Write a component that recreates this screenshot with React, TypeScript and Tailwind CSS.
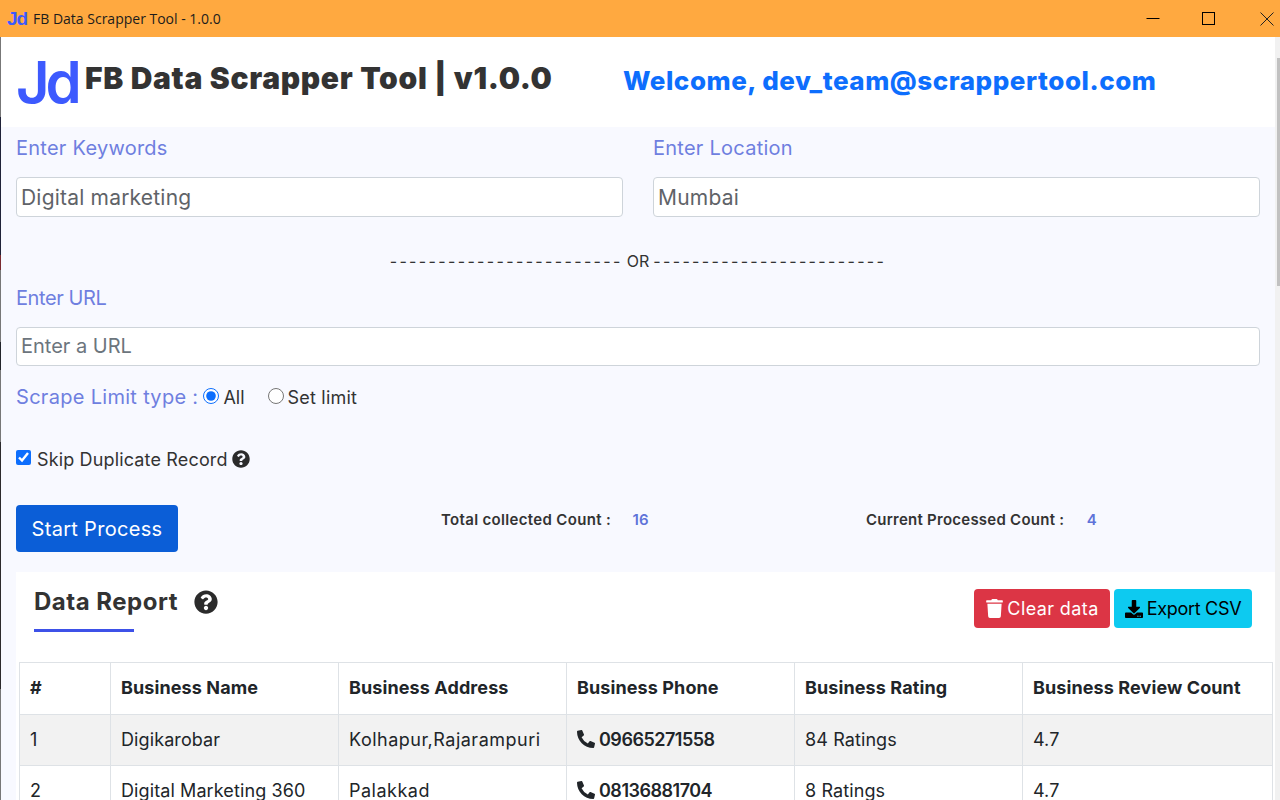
import { FaDownload, FaPhoneAlt, FaQuestionCircle, FaTrash } from "react-icons/fa";

const rows = [
  { id: 1, name: "Digikarobar", address: "Kolhapur,Rajarampuri", phone: "09665271558", rating: "84 Ratings", review: "4.7" },
  { id: 2, name: "Digital Marketing 360", address: "Palakkad", phone: "08136881704", rating: "8 Ratings", review: "4.7" },
];

const headers = ["#", "Business Name", "Business Address", "Business Phone", "Business Rating", "Business Review Count"];

function TitleBar() {
  return (
    <div className="flex h-[37px] shrink-0 items-center bg-[#ffa940] text-black">
      <span className="ml-[7px] w-[26px] font-['Liberation_Sans',sans-serif] text-[19px] leading-none font-bold tracking-[-1px] text-[#3d5afe]">
        Jd
      </span>
      <span className="font-['Open_Sans',sans-serif] text-[14px] text-[#1c1c1c]">
        FB Data Scrapper Tool - 1.0.0
      </span>
      <div className="ml-auto flex items-center">
        <svg width="14" height="14" viewBox="0 0 14 14" className="mr-[42px]" fill="none" stroke="#000">
          <path d="M0.5 6.5h13" />
        </svg>
        <svg width="14" height="14" viewBox="0 0 14 14" className="mr-[44px]" fill="none" stroke="#000">
          <rect x="0.5" y="0.5" width="12" height="12" />
        </svg>
        <svg width="14" height="14" viewBox="0 0 14 14" className="mr-[6px]" fill="none" stroke="#222">
          <path d="M0.5 0.5l13 13M13.5 0.5l-13 13" />
        </svg>
      </div>
    </div>
  );
}

function Header() {
  return (
    <div className="flex h-[90px] items-start bg-white">
      <span className="mt-[11px] ml-[15px] w-[69px] text-[58px] leading-[68px] font-semibold tracking-[-4px] text-[#3d5afe]">
        Jd
      </span>
      <h1 className="mt-[21px] w-[538px] text-[30px] leading-[40px] font-black tracking-[0.7px] text-[#333333]">
        FB Data Scrapper Tool | v1.0.0
      </h1>
      <p className="mt-[26px] text-[26px] leading-[36px] font-extrabold tracking-[0.55px] text-[#0d6efd]">
        Welcome, dev_team@scrappertool.com
      </p>
    </div>
  );
}

function Field({ label, value }: { label: string; value: string }) {
  return (
    <div className="min-w-0 flex-1">
      <label className="block text-[20px] leading-[30px] tracking-[0.25px] text-[#6f7fe0]">{label}</label>
      <input
        readOnly
        value={value}
        className="mt-[14px] block h-[40px] w-full rounded-[4px] border border-[#ced4da] bg-white px-[4px] text-[21px] tracking-[0.2px] text-[#5f6368]"
      />
    </div>
  );
}

function DataTable() {
  return (
    <table className="ml-[3px] w-[1253px] table-fixed border-collapse text-[18px] tracking-[0.1px] text-[#212529]">
      <colgroup>
        <col className="w-[91px]" />
        <col className="w-[228px]" />
        <col className="w-[228px]" />
        <col className="w-[228px]" />
        <col className="w-[228px]" />
        <col className="w-[250px]" />
      </colgroup>
      <thead>
        <tr className="h-[52px]">
          {headers.map((h) => (
            <th key={h} className="border border-[#dee2e6] bg-white px-[10px] pb-[2px] text-left font-bold">
              {h}
            </th>
          ))}
        </tr>
      </thead>
      <tbody>
        {rows.map((r) => (
          <tr key={r.id} className={r.id % 2 ? "h-[51px] bg-[#f2f2f2]" : "h-[51px] bg-white"}>
            <td className="border border-[#dee2e6] px-[10px] pb-[2px]">{r.id}</td>
            <td className="border border-[#dee2e6] px-[10px] pb-[2px]">{r.name}</td>
            <td className="border border-[#dee2e6] px-[10px] pb-[2px] tracking-[0.5px]">{r.address}</td>
            <td className="border border-[#dee2e6] px-[10px] pb-[2px] font-semibold tracking-[-0.5px]">
              <span className="flex items-center gap-[4px]">
                <FaPhoneAlt className="size-[18px]" />
                {r.phone}
              </span>
            </td>
            <td className="border border-[#dee2e6] px-[10px] pb-[2px]">{r.rating}</td>
            <td className="border border-[#dee2e6] px-[10px] pb-[2px]">{r.review}</td>
          </tr>
        ))}
      </tbody>
    </table>
  );
}

// sliver of the desktop showing behind the window's left edge
function DesktopEdge() {
  return (
    <div className="flex w-[1px] flex-col">
      <div className="h-[80px] bg-[#777777]" />
      <div className="h-[138px] bg-[#1f2238]" />
      <div className="h-[15px] bg-[#7a2a30]" />
      <div className="h-[72px] bg-[#777777]" />
      <div className="h-[28px] bg-[#22242a]" />
      <div className="h-[72px] bg-[#777777]" />
      <div className="h-[247px] bg-[#2c2a2c]" />
      <div className="h-[111px] bg-[#777777]" />
    </div>
  );
}

export default function App() {
  return (
    <div className="flex h-[800px] w-[1280px] flex-col overflow-hidden bg-white font-['Inter',sans-serif]">
      <TitleBar />
      <div className="flex min-h-0 flex-1">
        <DesktopEdge />
        <div className="min-w-0 flex-1">
          <Header />
          <div className="h-[700px] bg-[#f8f9ff] px-[15px] pt-[6px]">
            <div className="mr-[-1px] w-[1244px]">
              <div className="flex gap-[30px]">
                <Field label="Enter Keywords" value="Digital marketing" />
                <Field label="Enter Location" value="Mumbai" />
              </div>
              <p className="mt-[32px] flex justify-center gap-[4px] text-[16px] leading-[24px] text-[#333]">
                <span className="tracking-[2.35px]">------------------------</span>
                <span>OR</span>
                <span className="tracking-[2.35px]">------------------------</span>
              </p>
              <div className="mt-[10px]">
                <label className="block text-[20px] leading-[30px] tracking-[-0.4px] text-[#6f7fe0]">Enter URL</label>
                <input
                  readOnly
                  placeholder="Enter a URL"
                  className="mt-[14px] block h-[39px] w-full rounded-[4px] border border-[#ced4da] bg-white px-[4px] pb-[2px] text-[20px] placeholder:text-[#6c757d]"
                />
              </div>
              <div className="mt-[15px] flex h-[32px] items-center">
                <span className="text-[20px] tracking-[0.3px] text-[#6f7fe0]">Scrape Limit type :</span>
                <label className="ml-[5px] flex items-center gap-[4px] text-[18px] text-[#333]">
                  <input type="radio" name="limit" defaultChecked className="mb-[3px] size-[16px] accent-[#0d6efd]" />
                  All
                </label>
                <label className="ml-[23px] flex items-center gap-[4px] text-[18px] tracking-[0.2px] text-[#333]">
                  <input type="radio" name="limit" className="mb-[3px] size-[16px]" />
                  Set limit
                </label>
              </div>
              <div className="mt-[30px] flex h-[32px] items-center text-[18px] tracking-[0.15px] text-[#333]">
                <input type="checkbox" defaultChecked className="mb-[4px] size-[15px] accent-[#0d6efd]" />
                <span className="ml-[6px]">Skip Duplicate Record</span>
                <FaQuestionCircle className="ml-[4px] size-[18px] text-[#2b2b2b]" />
              </div>
              <div className="mt-[30px] flex h-[47px]">
                <button className="w-[162px] rounded-[4px] bg-[#0b5ed7] text-[20px] tracking-[0.3px] text-white">
                  Start Process
                </button>
                <div className="ml-[263px] flex h-[30px] w-[208px] items-center justify-between text-[15px] font-semibold tracking-[0.33px] text-[#333]">
                  <span>Total collected Count :</span>
                  <span className="text-[#5f73d9]">16</span>
                </div>
                <div className="ml-[217px] flex h-[30px] w-[231px] items-center justify-between text-[15px] font-semibold tracking-[0.25px] text-[#333]">
                  <span>Current Processed Count :</span>
                  <span className="text-[#5f73d9]">4</span>
                </div>
              </div>
            </div>
            <div className="mt-[20px] w-[1259px] bg-white">
              <div className="flex h-[90px] items-start">
                <div className="ml-[18px]">
                  <div className="mt-[13px] flex items-center">
                    <h2 className="text-[24px] leading-[34px] font-bold tracking-[0.5px] text-[#333]">Data Report</h2>
                    <FaQuestionCircle className="ml-[16px] size-[24px] text-[#2b2b2b]" />
                  </div>
                  <div className="mt-[10px] h-[3px] w-[100px] bg-[#3d51e8]" />
                </div>
                <div className="mt-[17px] mr-[23px] ml-auto flex gap-[4px] text-[18px]">
                  <button className="flex h-[39px] w-[136px] items-center justify-center gap-[3px] rounded-[4px] bg-[#dc3545] tracking-[0.4px] text-white">
                    <FaTrash className="size-[19px]" />
                    Clear data
                  </button>
                  <button className="flex h-[39px] w-[138px] items-center justify-center gap-[4px] rounded-[4px] bg-[#0dcaf0] tracking-[-0.3px] text-black">
                    <FaDownload className="size-[18px]" />
                    Export CSV
                  </button>
                </div>
              </div>
              <DataTable />
            </div>
          </div>
        </div>
        <div className="w-[5px] bg-[#f1f1f1] pt-[21px] pl-[2px]">
          <div className="h-[228px] bg-[#c1c1c1]" />
        </div>
      </div>
    </div>
  );
}
